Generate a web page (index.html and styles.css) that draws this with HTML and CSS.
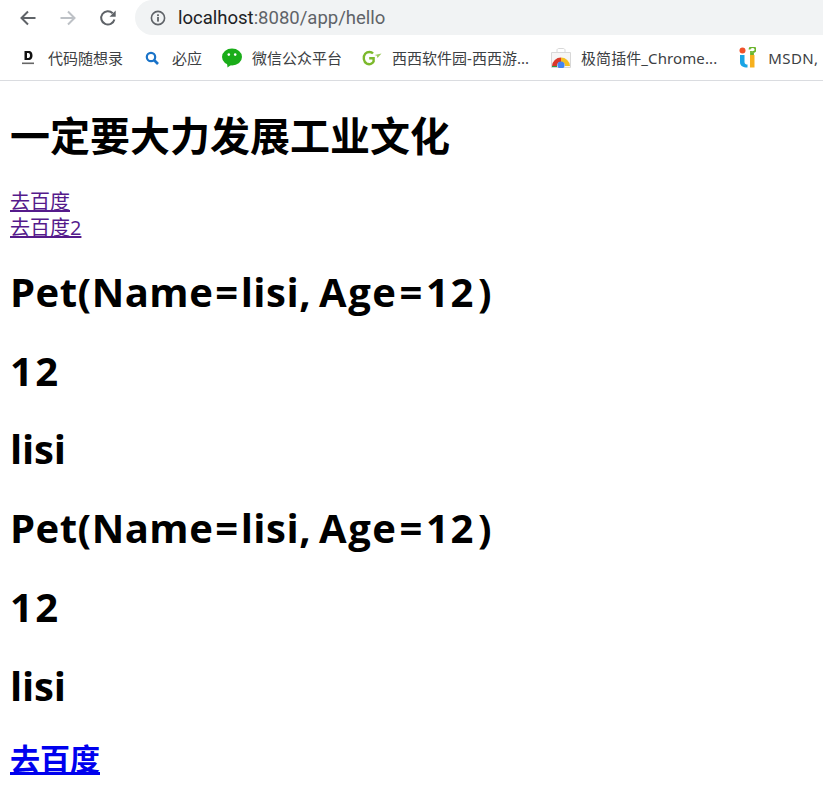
FILE: index.html
```html
<!DOCTYPE html>
<html lang="en">
<head>
    <meta charset="UTF-8">
    <title>hello</title>
    <link rel="stylesheet" href="styles.css">
</head>
<body>
<div class="chrome">
    <div class="toolbar">
        <svg class="nav-icon" viewBox="0 0 20 20"><path d="M17.5 10H3.5M10 3.5L3.5 10L10 16.5" fill="none" stroke="#5f6368" stroke-width="2"/></svg>
        <svg class="nav-icon" viewBox="0 0 20 20"><path d="M2.5 10H16.5M10 3.5L16.5 10L10 16.5" fill="none" stroke="#bdc1c6" stroke-width="2"/></svg>
        <svg class="nav-icon" viewBox="0 0 20 20"><path d="M16.4 11.5A6.7 6.7 0 1 1 14.7 5.2" fill="none" stroke="#5f6368" stroke-width="2"/><path d="M17.7 2.6V8.8H11.5Z" fill="#5f6368"/></svg>
        <div class="omnibox">
            <svg class="info-icon" viewBox="0 0 16 16"><circle cx="8" cy="8" r="6.6" fill="none" stroke="#5f6368" stroke-width="1.6"/><rect x="7.1" y="7" width="1.8" height="4.6" fill="#5f6368"/><rect x="7.1" y="4.3" width="1.8" height="1.8" fill="#5f6368"/></svg>
            <span class="host">localhost</span><span class="path">:8080/app/hello</span>
        </div>
    </div>
    <div class="bookmarks">
        <div class="bookmark bm-first">
            <svg class="bm-icon" viewBox="0 0 16 16"><path d="M4.5 1H8.5C11.5 1 12.5 3 12.5 5.5C12.5 8 11.5 10 8.5 10H4.5ZM7 3V8H8.2C9.6 8 10 7 10 5.5C10 4 9.6 3 8.2 3Z" fill="#111" fill-rule="evenodd"/><rect x="2" y="12.5" width="12" height="1.6" fill="#666"/></svg>
            <span>代码随想录</span>
        </div>
        <div class="bookmark bm-bing">
            <svg class="bm-icon" viewBox="0 0 16 16"><circle cx="7" cy="7" r="4.2" fill="none" stroke="#1a73c8" stroke-width="2.2"/><path d="M10 10L14 14" stroke="#1a73c8" stroke-width="2.6"/></svg>
            <span>必应</span>
        </div>
        <div class="bookmark bm-wechat">
            <svg class="bm-icon-wide" viewBox="0 0 20 20"><ellipse cx="10" cy="9" rx="10" ry="8.4" fill="#1aad19"/><path d="M5 14.5L5.5 19.5L10.5 16Z" fill="#1aad19"/><circle cx="6.8" cy="6.6" r="1.3" fill="#fff"/><circle cx="13.2" cy="6.6" r="1.3" fill="#fff"/></svg>
            <span>微信公众平台</span>
        </div>
        <div class="bookmark bm-xixi">
            <svg class="bm-icon-wide" viewBox="0 0 20 16"><path d="M11 3.4C9.5 1.6 5.6 1.2 3.2 3.8C0.8 6.6 1.4 11.8 4.8 13.6C7.6 15 10.6 13.8 11.6 11.6V8.2H7.2" fill="none" stroke="#7cb92c" stroke-width="2.4"/><path d="M12.5 5L19.5 3.4L15.5 8L14.8 5.8Z" fill="#9ccb5c"/></svg>
            <span>西西软件园-西西游...</span>
        </div>
        <div class="bookmark bm-store">
            <svg class="bm-icon-wide" viewBox="0 0 20 20"><path d="M0.5 4.5H19.5V19.5H0.5Z" fill="#f6f6f6" stroke="#d8d8d8"/><path d="M6 4.5V2C6 1 7 0.5 8 0.5H12C13 0.5 14 1 14 2V4.5" fill="none" stroke="#d8d8d8"/><path d="M1 18A9 9 0 0 1 10 9.5V14A4 4 0 0 0 6 18Z" fill="#d9392c"/><path d="M10 9.5A9 9 0 0 1 19 18H14A4 4 0 0 0 10 14Z" fill="#f4bf22"/><path d="M1 18H6V19H1Z" fill="#2f9e47"/><circle cx="10" cy="17" r="3.6" fill="#4285f4"/></svg>
            <span>极简插件_Chrome...</span>
        </div>
        <div class="bookmark bm-msdn">
            <svg class="bm-icon-tall" viewBox="0 0 17 21"><circle cx="3.5" cy="3.5" r="3" fill="#f0522b"/><path d="M1 8H5.5V15C5.5 17 7 17.5 8.5 17.5V20.5C4 20.5 1 19 1 15Z" fill="#19a5e6"/><path d="M10.5 2.5A3 2.5 0 1 1 14 5V7H12V4" fill="none" stroke="#6ab42d" stroke-width="1.8"/><path d="M11 8H15.5V20.5H11Z" fill="#f6b01e"/></svg>
            <span>MSDN,</span>
        </div>
    </div>
</div>
<div class="page">
    <h1 class="title">一定要大力发展工业文化</h1>
    <div class="links">
        <a href="#">去百度</a><br>
        <a href="#">去百度2</a>
    </div>
    <h1 class="pet">Pet(Name<span class="eq">=</span>lisi, <span class="tail">Age<span class="eq">=</span>12</span>)</h1>
    <h1 class="num">12</h1>
    <h1 class="name">lisi</h1>
    <h1 class="pet">Pet(Name<span class="eq">=</span>lisi, <span class="tail">Age<span class="eq">=</span>12</span>)</h1>
    <h1 class="num">12</h1>
    <h1 class="name">lisi</h1>
    <h2><a class="fresh" href="#">去百度</a></h2>
</div>
</body>
</html>
```
FILE: styles.css
```css
*{
    margin: 0;
    padding: 0;
}
html,body{
    overflow: hidden;
}
body{
    background: #fff;
    color: #000;
    font-family: "Open Sans", "Noto Sans CJK SC", sans-serif;
}
.chrome{
    height: 80px;
    border-bottom: 1px solid #dadce0;
    overflow: hidden;
}
.toolbar{
    display: flex;
    align-items: center;
    height: 35px;
    padding-left: 18px;
}
.nav-icon{
    width: 20px;
    height: 20px;
    margin-right: 20px;
    flex-shrink: 0;
}
.omnibox{
    display: flex;
    align-items: center;
    flex: 1;
    height: 35px;
    margin-left: -3px;
    margin-right: -20px;
    padding-left: 15px;
    background: #f1f3f4;
    border-radius: 18px 0 0 18px;
    font-family: Roboto, sans-serif;
    font-size: 18.5px;
    white-space: nowrap;
}
.info-icon{
    width: 16px;
    height: 16px;
    margin-right: 12px;
}
.host{
    color: #202124;
}
.path{
    color: #5f6368;
}
.bookmarks{
    display: flex;
    align-items: center;
    height: 45px;
    white-space: nowrap;
    font-family: "Noto Sans", "Noto Sans CJK SC", sans-serif;
    font-size: 15px;
    color: #3c4043;
}
.bookmark{
    display: flex;
    align-items: center;
    flex-shrink: 0;
}
.bm-icon{
    width: 16px;
    height: 16px;
    margin-right: 12px;
}
.bm-icon-wide{
    width: 20px;
    height: 20px;
    margin-right: 10px;
}
.bm-icon-tall{
    width: 17px;
    height: 21px;
    margin-right: 12px;
}
.bm-first{
    margin-left: 20px;
}
.bm-bing{
    margin-left: 21px;
}
.bm-wechat{
    margin-left: 20px;
}
.bm-xixi{
    margin-left: 20px;
}
.bm-store{
    margin-left: 22px;
}
.bm-msdn{
    margin-left: 22px;
}
.bm-msdn span{
    letter-spacing: 0.4px;
}
.bm-store span{
    letter-spacing: 0.1px;
}
.page{
    padding: 0 10px;
}
h1{
    font-size: 40px;
    font-weight: 700;
    line-height: 52px;
    margin: 26.8px 0;
}
.title{
    line-height: 54px;
    margin: 28px 0 26px;
}
.links{
    font-size: 20px;
    line-height: 26px;
    margin-bottom: -2px;
}
.links a{
    color: #551a8b;
}
.pet{
    letter-spacing: 0.5px;
    word-spacing: -3px;
}
.eq{
    margin: 0 2px;
}
.tail{
    letter-spacing: 1.6px;
    margin-right: 3px;
}
.num{
    letter-spacing: 2.5px;
}
.name{
    letter-spacing: -0.2px;
}
h2{
    font-size: 30px;
    font-weight: 700;
    line-height: 40px;
    margin: 26px 0;
}
.fresh{
    color: #0000ee;
}
```
